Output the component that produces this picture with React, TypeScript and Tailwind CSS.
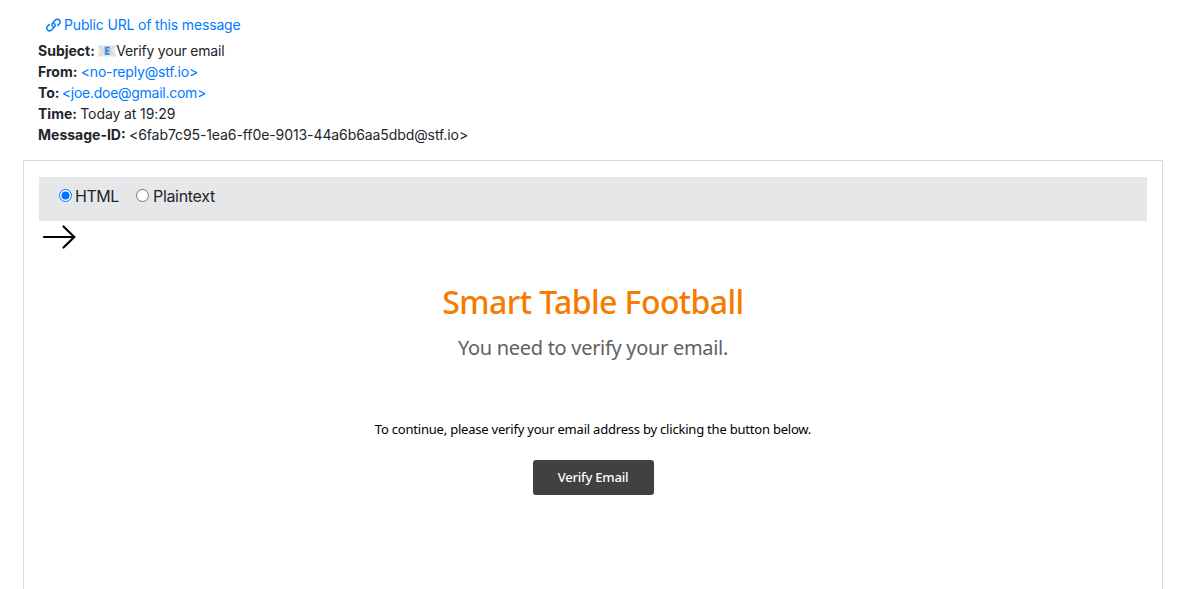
import type { ReactNode } from 'react';

function Row({ label, children }: { label: string; children: ReactNode }) {
  return (
    <div className="flex h-[21px] items-center whitespace-pre">
      <b className="font-bold">{label} </b>
      {children}
    </div>
  );
}

function LinkIcon() {
  return (
    <svg width="15" height="14" viewBox="0 0 15 14" className="mr-[3px] shrink-0" fill="none" stroke="currentColor" strokeWidth="1.500" strokeLinecap="round">
      <path d="M7 8.700C5.600 7.600 5.600 6 6.600 4.900L9.200 2.200C10.500.9 12.300.9 13.400 2C14.500 3.100 14.400 4.800 13.200 6L11.800 7.400" />
      <path d="M8 5.300C9.400 6.400 9.400 8 8.400 9.100L5.800 11.800C4.500 13.100 2.700 13.100 1.600 12C.5 10.900.6 9.200 1.800 8L3.200 6.600" />
    </svg>
  );
}

function EnvelopeIcon() {
  return (
    <svg width="18" height="14" viewBox="0 0 18 14" className="shrink-0">
      <rect x="0.5" y="1.5" width="17" height="11" fill="#e6e6e6" />
      <path d="M.5 1.5 9 8l8.500-6.500M.5 12.500 6 7M17.500 12.500 12 7" fill="none" stroke="#c6c6c6" strokeWidth="0.8" />
      <rect x="6" y="2.5" width="6.500" height="8.500" fill="#a9cff5" />
      <path d="M11.500 3.500H8v6.500H11.500M8 6.800h3" fill="none" stroke="#3f82cc" strokeWidth="1.600" />
    </svg>
  );
}

function Radio({ checked }: { checked?: boolean }) {
  return (
    <svg width="13" height="13" viewBox="0 0 13 13" className="-mt-[2px] shrink-0">
      <circle cx="6.5" cy="6.5" r="6" fill="#fff" stroke={checked ? '#0075ff' : '#767676'} />
      {checked && <circle cx="6.5" cy="6.5" r="4" fill="#0075ff" />}
    </svg>
  );
}

export default function App() {
  return (
    <div className="h-[589px] overflow-hidden bg-white px-[23px] pt-[14px] font-['Inter',sans-serif] text-[14px] text-[#212529]">
      <header className="h-[146px] pl-[15px]">
        <a className="flex h-[21px] items-center pl-[8px] text-[#007bff]">
          <LinkIcon />
          <span className="tracking-[-0.16px]">Public URL of this message</span>
        </a>
        <div className="mt-[5px]">
          <Row label="Subject:">
            <EnvelopeIcon />
            <span className="tracking-[-0.2px]">Verify your email</span>
          </Row>
          <Row label="From:">
            <a className="tracking-[-0.16px] text-[#007bff]">&lt;no-reply@stf.io&gt;</a>
          </Row>
          <Row label="To:">
            <a className="-ml-px tracking-[-0.27px] text-[#007bff]">&lt;joe.doe@gmail.com&gt;</a>
          </Row>
          <Row label="Time:">
            <span className="tracking-[-0.1px]">Today at 19:29</span>
          </Row>
          <Row label="Message-ID:">
            <span className="tracking-[-0.09px]">&lt;6fab7c95-1ea6-ff0e-9013-44a6b6aa5dbd@stf.io&gt;</span>
          </Row>
        </div>
      </header>
      <main className="h-[440px] w-[1140px] border border-[#d9d8e6] px-[15px] pt-[16px]">
        <div className="flex h-[44px] bg-[#e6e7e9] pl-[20px] pt-[7px] text-[16px] leading-[24px]">
          <label className="flex h-[24px] items-center gap-[3px]">
            <Radio checked />
            <span className="w-[61px] tracking-[-0.5px]">HTML</span>
          </label>
          <label className="flex h-[24px] items-center gap-[4px]">
            <Radio />
            <span className="tracking-[-0.32px]">Plaintext</span>
          </label>
        </div>
        <svg width="40" height="32" viewBox="0 0 40 32" className="block">
          <path d="M5 16h30.500M24.500 5.500 35.300 16 24.500 26.500" fill="none" stroke="#000" strokeWidth="2.200" strokeLinecap="round" strokeLinejoin="round" />
        </svg>
        <section className="flex flex-col items-center whitespace-nowrap pt-[28px] font-['Noto_Sans',sans-serif]">
          <h1 className="h-[42px] text-[32px] font-medium leading-[42px] text-[#f57c00]"><span className="tracking-[-0.58px]">Smart Table Football</span></h1>
          <p className="mt-[10px] h-[30px] text-[20px] leading-[30px] text-[#616161]"><span className="tracking-[-0.3px]">You need to verify your email.</span></p>
          <p className="mt-[56px] h-[20px] text-[13px] leading-[20px] text-black"><span className="tracking-[-0.21px]">To continue, please verify your email address by clicking the button below.</span></p>
          <button className="mt-[21px] h-[35px] w-[121px] rounded-[3px] bg-[#414141] text-[13px] font-medium text-white">
            <span className="tracking-[-0.2px]">Verify Email</span>
          </button>
        </section>
      </main>
    </div>
  );
}
